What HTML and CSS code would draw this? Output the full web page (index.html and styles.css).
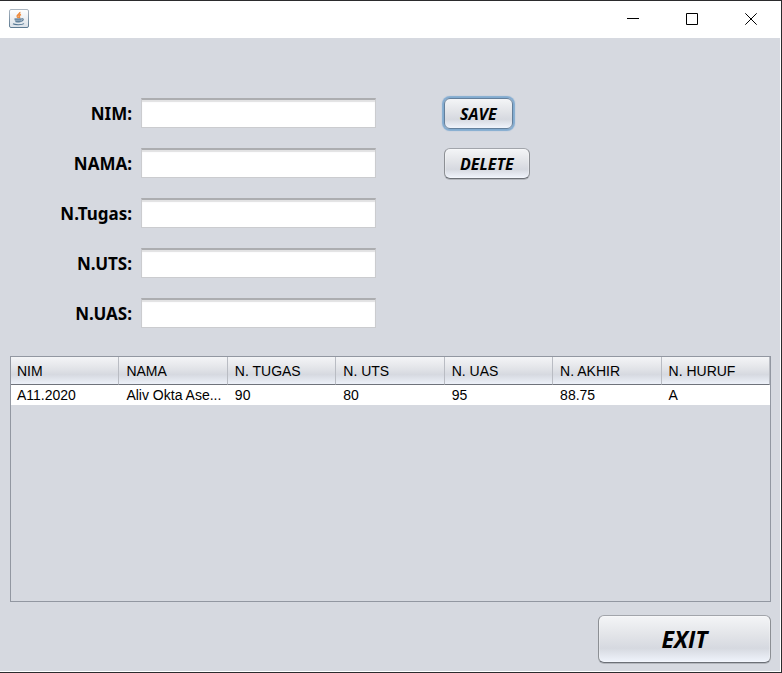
FILE: index.html
```
<!DOCTYPE html>
<html lang="id">
<head>
<meta charset="utf-8">
<meta name="viewport" content="width=device-width, initial-scale=1">
<title>Data Nilai</title>
<link rel="stylesheet" href="styles.css">
</head>
<body>
<div class="window">
  <header class="titlebar">
    <svg class="app-icon" viewBox="0 0 20 20" aria-hidden="true">
      <defs>
        <linearGradient id="tile" x1="0" y1="0" x2="0" y2="1">
          <stop offset="0" stop-color="#fff"/>
          <stop offset="1" stop-color="#dbe1e8"/>
        </linearGradient>
        <linearGradient id="edge" x1="0" y1="0" x2="0" y2="1">
          <stop offset="0" stop-color="#aab5c0"/>
          <stop offset="1" stop-color="#5d7a92"/>
        </linearGradient>
      </defs>
      <rect x="0.5" y="0.5" width="19" height="18" rx="1.5" fill="url(#tile)" stroke="url(#edge)"/>
      <path d="M10.800 3c.8 1.900-3.300 2.700-2.600 4.500.3.700.9 1.100 1.200 1.500M12 5.500c-2 .9-2.500 1.500-1.500 2.500.3.500.1.900-.3 1.300" fill="none" stroke="#ee8a3c" stroke-width="1.500"/>
      <path d="M5.500 9.800h7c0 3-.8 3.700-3.500 3.700s-3.300-1-3.500-3.700z" fill="#8ba3b7"/>
      <path d="M5.500 10h7M6.500 12.700h5M12.500 10c2-.8 3 1.300-.8 2.500M4 14.800c2 1.200 9 1.200 11-.2" fill="none" stroke="#557793" stroke-width="1.100"/>
    </svg>
    <div class="caption-buttons">
      <button class="caption-button" type="button" aria-label="Minimize"><svg viewBox="0 0 12 12"><path d="M0 5.500h12"/></svg></button>
      <button class="caption-button" type="button" aria-label="Maximize"><svg viewBox="0 0 12 12"><path d="M.5.5h11v11H.5z"/></svg></button>
      <button class="caption-button" type="button" aria-label="Close"><svg viewBox="0 0 12 12"><path d="M.3.3l11.400 11.400M11.700.3L.3 11.700"/></svg></button>
    </div>
  </header>
  <main class="content">
    <form class="form">
      <div class="fields">
        <label for="nim">NIM:</label><input id="nim" type="text">
        <label for="nama">NAMA:</label><input id="nama" type="text">
        <label for="tugas">N.Tugas:</label><input id="tugas" type="text">
        <label for="uts">N.UTS:</label><input id="uts" type="text">
        <label for="uas">N.UAS:</label><input id="uas" type="text">
      </div>
      <div class="actions">
        <button class="button button-focused" type="button">SAVE</button>
        <button class="button" type="button">DELETE</button>
      </div>
    </form>
    <div class="table-pane">
      <table>
        <thead>
          <tr><th>NIM</th><th>NAMA</th><th>N. TUGAS</th><th>N. UTS</th><th>N. UAS</th><th>N. AKHIR</th><th>N. HURUF</th></tr>
        </thead>
        <tbody>
          <tr><td>A11.2020</td><td>Aliv Okta Ase...</td><td>90</td><td>80</td><td>95</td><td>88.75</td><td>A</td></tr>
        </tbody>
      </table>
    </div>
    <button class="button button-exit" type="button">EXIT</button>
  </main>
</div>
</body>
</html>
```
FILE: styles.css
```
* {
  box-sizing: border-box;
}

body {
  margin: 0;
  background: #fff;
  color: #000;
  font-family: "Liberation Sans", Arial, sans-serif;
}

.window {
  display: flex;
  flex-direction: column;
  min-height: 100vh;
  border: solid #2b2b2d;
  border-width: 1px 1px 1px 0;
}

.titlebar {
  display: flex;
  align-items: center;
  justify-content: space-between;
  height: 37px;
  padding: 0 1px 2px 9px;
}

.app-icon {
  width: 20px;
  height: 20px;
}

.caption-buttons {
  display: flex;
}

.caption-button {
  display: flex;
  align-items: center;
  justify-content: center;
  width: 59px;
  height: 34px;
  padding: 0;
  border: 0;
  background: none;
}

.caption-button svg {
  width: 12px;
  height: 12px;
  fill: none;
  stroke: #000;
}

.content {
  display: flex;
  flex: 1;
  flex-direction: column;
  margin: 0 1px 1px 0;
  padding: 60px 9px 8px 10px;
  background: #d6d9e0;
}

.form {
  display: flex;
  gap: 68px;
}

.fields {
  display: grid;
  grid-template-columns: 122px 235px;
  grid-auto-rows: 30px;
  gap: 20px 9px;
}

.fields label {
  text-align: right;
  font: bold 17px/32px "Noto Sans", "Open Sans", sans-serif;
}

.fields input {
  width: 100%;
  height: 30px;
  padding: 0 6px;
  border: 1px solid #cbcccf;
  border-top: 2px solid #acadb0;
  border-radius: 0;
  background: #fff;
  box-shadow: inset 0 2px 1px #e2e2e3;
  font: 15px "Liberation Sans", Arial, sans-serif;
  outline: 0;
}

.actions {
  display: flex;
  flex-direction: column;
  align-items: flex-start;
  gap: 19px;
}

.button {
  height: 31px;
  padding: 0 15px;
  border: 1px solid;
  border-color: #a2a5ab #8c8f94 #6c7077;
  border-radius: 6px;
  background: linear-gradient(#f4f5f7, #e3e5e9 40%, #d6d9e0 70%, #f0f4fc);
  box-shadow: 0 1px 0 #b4b7bd, inset 0 0 0 1px rgba(255, 255, 255, 0.25);
  color: #000;
  font: italic bold 16px/28px "Open Sans", "Noto Sans", sans-serif;
}

.button-focused {
  border-color: #637f9b;
  box-shadow: 0 0 1px 2px #82abd0;
}

.table-pane {
  flex: 1;
  min-height: 246px;
  margin-top: 28px;
  border: 1px solid #9297a1;
}

table {
  width: 100%;
  table-layout: fixed;
  border-collapse: separate;
  border-spacing: 0;
  font-size: 14px;
  line-height: 20px;
}

th,
td {
  overflow: hidden;
  padding: 0 0 0 7px;
  text-align: left;
  white-space: nowrap;
  font-weight: normal;
}

th:first-child,
td:first-child {
  padding-left: 6px;
}

th {
  height: 28px;
  border-right: 1px solid #b9bcc3;
  border-bottom: 1px solid #6f737b;
  background: linear-gradient(#f4f5f7, #e3e5e9 40%, #d6d9e0 65%, #edf1f9);
}

td {
  height: 20px;
  background: #fff;
}

.button-exit {
  align-self: flex-end;
  width: 173px;
  height: 48px;
  margin-top: 13px;
  font-size: 23px;
  line-height: 46px;
}
```
